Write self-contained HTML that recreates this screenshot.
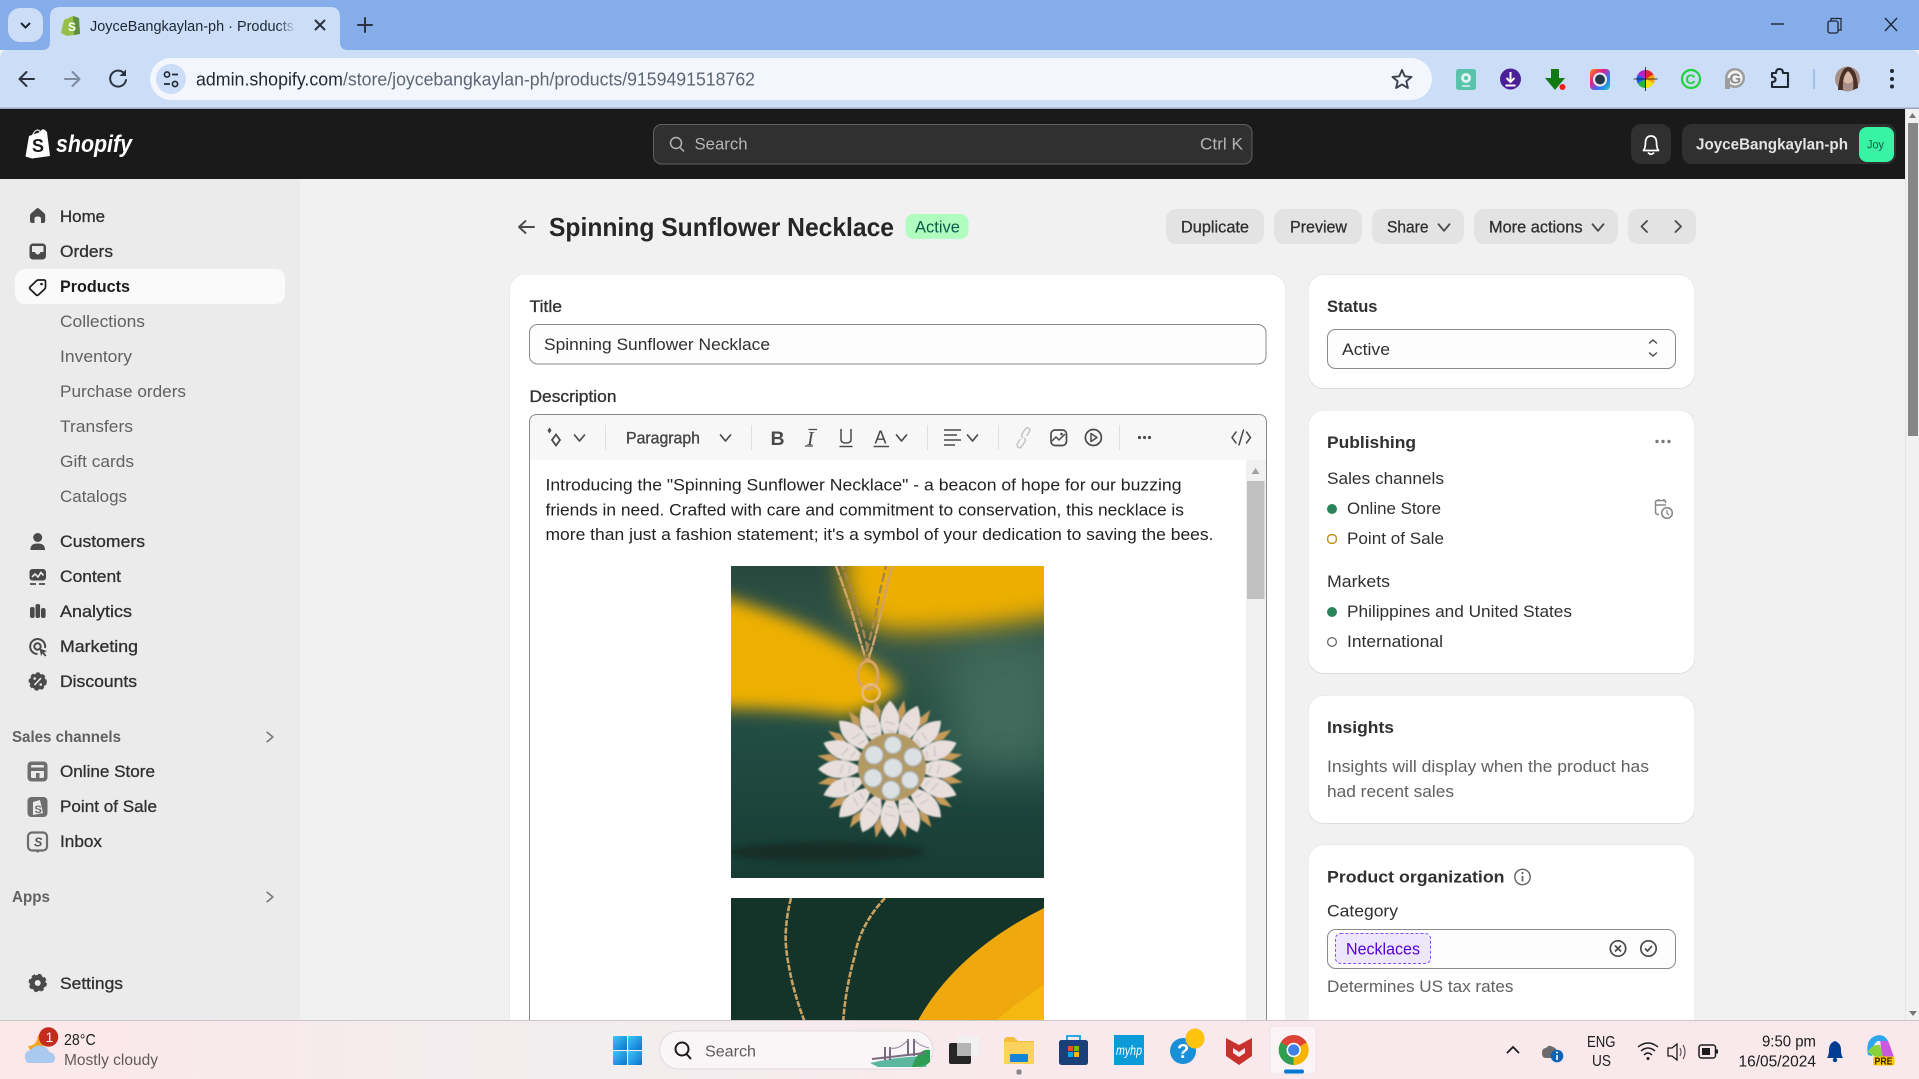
<!DOCTYPE html>
<html lang="en"><head><meta charset="utf-8"><title>Spinning Sunflower Necklace</title>
<style>
html,body{margin:0;padding:0;background:#f1f1f1;overflow:hidden}
svg{display:block}
text{font-family:"Liberation Sans",sans-serif;font-size:16.5px;fill:#303030;white-space:pre}
.m{stroke:#303030;stroke-width:.3px}
.g{fill:#616161}
.s{fill:#4a4a4a}
.b{font-weight:700}
.sb{font-weight:700;fill:#616161;font-size:15.5px}
.l{fill:none;stroke:#4a4a4a;stroke-width:1.6;stroke-linecap:round;stroke-linejoin:round}
.w{fill:none;stroke:#fff;stroke-width:1.7;stroke-linecap:round;stroke-linejoin:round}
.d{fill:none;stroke:#2b3340;stroke-width:2;stroke-linecap:round;stroke-linejoin:round}
.t{fill:#1c1c1c}
</style></head>
<body>
<svg xmlns="http://www.w3.org/2000/svg" width="1919" height="1079" viewBox="0 0 1919 1079">
<defs>
<filter id="b06"><feGaussianBlur stdDeviation=".8"/></filter>
<filter id="b2" x="-20%" y="-50%" width="140%" height="200%"><feGaussianBlur stdDeviation="3"/></filter>
<filter id="b5" x="-30%" y="-30%" width="160%" height="160%"><feGaussianBlur stdDeviation="8"/></filter>
<filter id="b9" x="-30%" y="-30%" width="160%" height="160%"><feGaussianBlur stdDeviation="12"/></filter>
<filter id="b20" x="-50%" y="-50%" width="200%" height="200%"><feGaussianBlur stdDeviation="22"/></filter>
<clipPath id="c1"><rect x="731" y="566" width="313" height="312"/></clipPath>
<clipPath id="c2"><rect x="731" y="898" width="313" height="122"/></clipPath>
<linearGradient id="tb" x1="0" x2="1" y1="0" y2="0"><stop offset="0" stop-color="#fce7e9"/><stop offset=".3" stop-color="#f2eeef"/><stop offset=".52" stop-color="#f9e9ec"/><stop offset="1" stop-color="#f9e9ec"/></linearGradient>
<linearGradient id="gr1" x1="0" x2="0" y1="0" y2="1"><stop offset="0" stop-color="#27493e"/><stop offset=".3" stop-color="#34574a"/><stop offset=".55" stop-color="#214c42"/><stop offset="1" stop-color="#173c34"/></linearGradient>
<linearGradient id="win" x1="0" x2="1" y1="0" y2="1"><stop offset="0" stop-color="#42c5f5"/><stop offset="1" stop-color="#0a73cf"/></linearGradient>
<linearGradient id="rb" x1="0" x2="1" y1="0" y2="1"><stop offset="0" stop-color="#ff8a00"/><stop offset=".35" stop-color="#e0218a"/><stop offset=".7" stop-color="#2a7bff"/><stop offset="1" stop-color="#22d3a5"/></linearGradient>
<linearGradient id="fade" x1="0" x2="1" y1="0" y2="0"><stop offset="0" stop-color="#cbddf7" stop-opacity="0"/><stop offset="1" stop-color="#cbddf7"/></linearGradient>
<g id="petal"><path d="M0 -72 Q19 -52 0 -27 Q-19 -52 0 -72Z" fill="#e8dfdc"/><path d="M-5 -50 L5 -47 M-4 -41 L4 -39" stroke="#b9bcc2" stroke-width="1" fill="none"/></g>
<path id="tip" d="M0 -74 L4 -62 L0 -52 L-4 -62Z"/>
<path id="ch" d="M-5 -3 L0 3 L5 -3" fill="none" stroke="#4a4a4a" stroke-width="1.700" stroke-linecap="round" stroke-linejoin="round"/>
</defs>

<!-- page -->
<rect width="1919" height="1079" fill="#f1f1f1"/>
<rect x="0" y="179" width="300" height="841" fill="#ebebeb"/>

<!-- chrome tab strip -->
<rect width="1919" height="50" fill="#84adea"/>
<rect x="8" y="8" width="35" height="34" rx="12" fill="#cbddf7"/>
<path d="M21 23 L25.500 27.500 L30 23" fill="none" stroke="#1c2530" stroke-width="2"/>
<path d="M42 50 Q50 50 50 42 V17 Q50 7 60 7 H330 Q340 7 340 17 V42 Q340 50 348 50 Z" fill="#cbddf7"/>
<path d="M64 20 L73 16 L79 18 L80 34 L67 36 L61 33 Z" fill="#95bf47"/><path d="M73 16 L79 18 L80 34 L74 35 Z" fill="#5e8e3e"/>
<text x="68" y="31" style="font-size:12px;font-weight:700;fill:#fff">S</text>
<text x="90" y="31" textLength="204" lengthAdjust="spacingAndGlyphs" style="font-size:14.5px;fill:#1f2733">JoyceBangkaylan-ph · Products</text>
<rect x="278" y="14" width="18" height="24" fill="url(#fade)"/>
<path d="M315.500 20.500 L324.500 29.500 M324.500 20.500 L315.500 29.500" class="d"/>
<path d="M365 18 V32 M358 25 H372" class="d"/>
<path d="M1771 24 H1784" stroke="#1c2530" stroke-width="1.400"/>
<rect x="1828" y="21" width="10" height="12" rx="2" fill="none" stroke="#1c2530" stroke-width="1.300"/><path d="M1831 21 V18.500 H1841 V30 H1838" fill="none" stroke="#1c2530" stroke-width="1.200"/>
<path d="M1885 18 L1897 31 M1897 18 L1885 31" stroke="#1c2530" stroke-width="1.300"/>

<!-- chrome toolbar -->
<path d="M0 58 Q0 50 8 50 H1911 Q1919 50 1919 58 V108 H0 Z" fill="#cbddf7"/>
<rect x="0" y="107.500" width="1919" height="1.500" fill="#9aa6b8"/>
<path d="M34 79 H20 M26.500 72 L19.500 79 L26.500 86" class="d"/>
<path d="M65 79 H79 M72.500 72 L79.500 79 L72.500 86" class="d" style="stroke:#7f8b9e"/>
<path d="M125 74.500 A8 8 0 1 0 126 80" class="d"/><path d="M126 69.500 V76 H119.500 Z" fill="#2b3340"/>
<rect x="150" y="58" width="1282" height="42" rx="21" fill="#f3f7fd"/>
<circle cx="171" cy="79" r="15" fill="#cbddf7"/>
<circle cx="167" cy="74.500" r="2.600" fill="none" stroke="#1f2733" stroke-width="1.600"/><path d="M172 74.500 H178 M164 84 H170" stroke="#1f2733" stroke-width="1.800"/><circle cx="175" cy="84" r="2.600" fill="none" stroke="#1f2733" stroke-width="1.600"/>
<text x="196" y="85.500" textLength="147" lengthAdjust="spacingAndGlyphs" style="font-size:18.500px;fill:#1f2733">admin.shopify.com</text>
<text x="343" y="85.500" textLength="412" lengthAdjust="spacingAndGlyphs" style="font-size:18.500px;fill:#5d6675">/store/joycebangkaylan-ph/products/9159491518762</text>
<path d="M1402 70 L1404.700 76.300 L1411.500 76.900 L1406.300 81.300 L1407.900 88 L1402 84.400 L1396.100 88 L1397.700 81.300 L1392.500 76.900 L1399.300 76.300 Z" fill="none" stroke="#3a4250" stroke-width="1.900" stroke-linejoin="round"/>
<!-- extensions -->
<rect x="1456" y="69" width="20" height="21" rx="2.500" fill="#5ac3ab"/><circle cx="1466" cy="78" r="5" fill="#dff3ee"/><circle cx="1466" cy="78" r="2" fill="#5ac3ab"/><path d="M1462 86 H1470" stroke="#dff3ee" stroke-width="1.500"/>
<circle cx="1510.500" cy="79" r="10.500" fill="#4a1f98"/><path d="M1510.500 72 V81 M1506.500 78 L1510.500 82 L1514.500 78 M1505.500 85.500 H1515.500" fill="none" stroke="#fff" stroke-width="2"/>
<path d="M1551 69 H1559 V78 H1565 L1555 90 L1545 78 H1551 Z" fill="#137a13"/><circle cx="1562.500" cy="87" r="3" fill="#f01c1c"/>
<rect x="1590" y="69" width="20" height="21" rx="4" fill="url(#rb)"/><circle cx="1600" cy="79.500" r="7" fill="#e8eef2"/><circle cx="1600" cy="79.500" r="5" fill="#23394a"/>
<g transform="translate(1645.600 79)"><path d="M0 0 L0 -9 A9 9 0 0 1 7.800 -4.500 Z" fill="#e5232a"/><path d="M0 0 L7.800 -4.500 A9 9 0 0 1 7.800 4.500 Z" fill="#f5a300"/><path d="M0 0 L7.800 4.500 A9 9 0 0 1 0 9 Z" fill="#f2e500"/><path d="M0 0 L0 9 A9 9 0 0 1 -7.800 4.500 Z" fill="#25b43a"/><path d="M0 0 L-7.800 4.500 A9 9 0 0 1 -7.800 -4.500 Z" fill="#1a5cf0"/><path d="M0 0 L-7.800 -4.500 A9 9 0 0 1 0 -9 Z" fill="#b422c8"/><path d="M0 -12 V12 M-12 0 H12" stroke="#111" stroke-width=".8"/></g>
<circle cx="1691" cy="79" r="9" fill="none" stroke="#1fd13a" stroke-width="2.200"/><text x="1685.500" y="84" style="font-size:14px;font-weight:700;fill:#1fd13a">C</text>
<circle cx="1735" cy="78" r="10" fill="#9d9d9d"/><circle cx="1735" cy="78" r="7.500" fill="#f2f2f2"/><rect x="1725" y="78" width="5" height="11" fill="#9d9d9d"/><text x="1729.500" y="83.500" style="font-size:15px;font-weight:700;fill:#8a8a8a">G</text>
<path d="M1772 73 H1776 Q1776 69 1779.500 69 Q1783 69 1783 73 H1788 V87 H1772 V82 Q1775.500 82 1775.500 79.500 Q1775.500 77 1772 77 Z" fill="none" stroke="#1f2733" stroke-width="2.100" stroke-linejoin="round"/>
<path d="M1814 69 V89" stroke="#8fb0df" stroke-width="1.300"/>
<circle cx="1847.500" cy="79" r="12.500" fill="#a89088"/><ellipse cx="1848" cy="76" rx="6" ry="7.500" fill="#d8b8a6"/><path d="M1838 90 Q1840 68 1848 67 Q1857 68 1858 88 L1853 90 Q1855 76 1848 71 Q1842 76 1843 90 Z" fill="#4a2f26"/>
<circle cx="1892" cy="71" r="2" fill="#1f2733"/><circle cx="1892" cy="79" r="2" fill="#1f2733"/><circle cx="1892" cy="86.500" r="2" fill="#1f2733"/>

<!-- shopify header -->
<rect x="0" y="109" width="1905" height="70" fill="#1a1a1a"/>
<path d="M29 136 L40 132 Q42 128 45 130 L47 132 L50 156 L32 158.500 L25.500 156.500 Z" fill="#fff"/>
<path d="M32 137 Q34 130 38 130 Q41 131 41 135" fill="none" stroke="#fff" stroke-width="1"/>
<text x="32" y="152" style="font-size:18px;font-weight:700;fill:#1a1a1a">S</text>
<text x="56" y="152" textLength="76" lengthAdjust="spacingAndGlyphs" style="font-size:24px;font-weight:700;font-style:italic;fill:#fff">shopify</text>
<rect x="653.500" y="124.500" width="598.500" height="39.500" rx="8" fill="#303030" stroke="#616161"/>
<circle cx="676" cy="143" r="5.500" fill="none" stroke="#b5b5b5" stroke-width="1.500"/><path d="M680 147.500 L684 151.500" stroke="#b5b5b5" stroke-width="1.500"/>
<text x="694.500" y="149.500" textLength="53" lengthAdjust="spacingAndGlyphs" style="fill:#b5b5b5">Search</text>
<text x="1200" y="149.500" textLength="43" lengthAdjust="spacingAndGlyphs" style="fill:#b5b5b5">Ctrl K</text>
<rect x="1631" y="124" width="40" height="40" rx="10" fill="#303030"/>
<path d="M1651 136 Q1646 136 1645.500 142 Q1645.500 148 1643.500 150.500 H1658.500 Q1656.500 148 1656.500 142 Q1656 136 1651 136 Z" class="w"/><path d="M1648.500 153 Q1651 155.500 1653.500 153" class="w"/>
<rect x="1682" y="124" width="214" height="40" rx="10" fill="#303030"/>
<text x="1696" y="149.500" textLength="152" lengthAdjust="spacingAndGlyphs" style="font-weight:700;fill:#e3e3e3;font-size:16px">JoyceBangkaylan-ph</text>
<rect x="1859" y="127" width="35" height="35" rx="8" fill="#36f4a4"/>
<text x="1867" y="148.500" textLength="17" lengthAdjust="spacingAndGlyphs" style="font-size:11.500px;fill:#1b5c41">Joy</text>

<!-- scrollbar -->
<rect x="1905" y="109" width="14" height="911" fill="#f1f1f1"/><path d="M1905.500 109 V1020" stroke="#e4e4e4"/>
<rect x="1908" y="123" width="10" height="313" fill="#868686"/>
<path d="M1912.500 113 L1916 118 H1909 Z" fill="#777"/><path d="M1909 1011 H1917 L1913 1016 Z" fill="#777"/>

<!-- sidebar -->
<rect x="15" y="269" width="270" height="35" rx="10" fill="#fafafa"/>
<g>
<path d="M37.700 208 Q38.500 208 39.500 209 L44 213 Q45.200 214 45.200 216 V221 Q45.200 223 43 223 H41 V218.500 Q41 216.500 37.700 216.500 Q34.500 216.500 34.500 218.500 V223 H32.500 Q30 223 30 221 V216 Q30 214 31.500 213 L36 209 Q37 208 37.700 208 Z" fill="#4a4a4a"/>
<rect x="29.500" y="243.500" width="16.500" height="16" rx="3.500" fill="#4a4a4a"/><path d="M32 246 H43.500 V252 H40.500 Q39.500 254.500 37.700 254.500 Q36 254.500 35 252 H32 Z" fill="#ebebeb"/>
<path d="M38 280 H44 Q45.500 280 45.500 281.500 V287 Q45.500 288 44.700 289 L38.200 295 Q37.300 295.700 36.300 295 L30 289 Q29.200 288 30 287 L36.300 281 Q37 280 38 280 Z" fill="none" stroke="#1a1a1a" stroke-width="1.700" stroke-linejoin="round"/><circle cx="41.500" cy="284" r="1.300" fill="#1a1a1a"/>
<circle cx="37.700" cy="537.500" r="4.500" fill="#4a4a4a"/><path d="M30.500 550 Q30 543.500 37.700 543.500 Q45.200 543.500 45 550 Z" fill="#4a4a4a"/>
<rect x="29.500" y="569" width="16.500" height="11.500" rx="3" fill="#4a4a4a"/><path d="M32 577 L35 574 L38 577 L41 572.500 L43.500 575.500" fill="none" stroke="#ebebeb" stroke-width="1.600"/><path d="M30 584 H36 M39 584 H45" stroke="#4a4a4a" stroke-width="1.700"/>
<rect x="30" y="607" width="4.600" height="11" rx="2" fill="#4a4a4a"/><rect x="35.500" y="604" width="4.600" height="14" rx="2" fill="#4a4a4a"/><rect x="41" y="608" width="4.600" height="10" rx="2" fill="#4a4a4a"/>
<path d="M45 648 A7.500 7.500 0 1 0 37.500 654" fill="none" stroke="#4a4a4a" stroke-width="2"/><circle cx="37.500" cy="646.500" r="3.200" fill="none" stroke="#4a4a4a" stroke-width="2"/><path d="M39.500 648.500 L47 651 L44 652.500 L46.500 655.500 L45 656.500 L42.500 653.500 L41 656 Z" fill="#4a4a4a"/>
<circle cx="37.700" cy="681.500" r="8" fill="#4a4a4a" stroke="#4a4a4a" stroke-width="2.200" stroke-dasharray="3.500 2.500"/><path d="M34.500 685 L41 678" stroke="#ebebeb" stroke-width="1.600"/><circle cx="34.700" cy="678.500" r="1.300" fill="#ebebeb"/><circle cx="40.700" cy="684.500" r="1.300" fill="#ebebeb"/>
<rect x="27.500" y="761.500" width="20" height="20" rx="4" fill="#6e6e6e"/><rect x="31" y="765" width="13" height="13" rx="1.500" fill="#ebebeb"/><rect x="31" y="767.500" width="13" height="3.500" fill="#6e6e6e"/><rect x="36" y="773" width="3.500" height="5" fill="#6e6e6e"/>
<rect x="27.500" y="797" width="20" height="20" rx="4" fill="#6e6e6e"/><path d="M33 802 L40 800 L43 813 L33 815 Z" fill="#ebebeb"/><text x="34.500" y="813" style="font-size:11px;font-weight:700;fill:#6e6e6e">S</text>
<rect x="28" y="832.500" width="19" height="18" rx="4" fill="#ebebeb" stroke="#6e6e6e" stroke-width="2.200"/><path d="M34.500 850 L37.700 853 L41 850 Z" fill="#6e6e6e"/><text x="34" y="846.500" style="font-size:12.500px;font-weight:700;font-style:italic;fill:#5a5a5a">S</text>
<circle cx="37.700" cy="983" r="5.500" fill="none" stroke="#4a4a4a" stroke-width="5"/><circle cx="37.700" cy="983" r="8" fill="none" stroke="#4a4a4a" stroke-width="2.400" stroke-dasharray="3.500 2.800"/><circle cx="37.700" cy="983" r="2.600" fill="#ebebeb"/>
<use href="#ch" transform="translate(270 737) rotate(-90) scale(.95)" style="opacity:.7"/><use href="#ch" transform="translate(270 897) rotate(-90) scale(.95)" style="opacity:.7"/>
</g>
<text class="m" x="60" y="222" textLength="45" lengthAdjust="spacingAndGlyphs">Home</text>
<text class="m" x="60" y="257" textLength="53" lengthAdjust="spacingAndGlyphs">Orders</text>
<text class="b" x="60" y="292" textLength="70" lengthAdjust="spacingAndGlyphs" style="fill:#1c1c1c">Products</text>
<text class="g" x="60" y="327" textLength="85" lengthAdjust="spacingAndGlyphs">Collections</text>
<text class="g" x="60" y="362" textLength="72" lengthAdjust="spacingAndGlyphs">Inventory</text>
<text class="g" x="60" y="397" textLength="126" lengthAdjust="spacingAndGlyphs">Purchase orders</text>
<text class="g" x="60" y="432" textLength="73" lengthAdjust="spacingAndGlyphs">Transfers</text>
<text class="g" x="60" y="467" textLength="74" lengthAdjust="spacingAndGlyphs">Gift cards</text>
<text class="g" x="60" y="502" textLength="67" lengthAdjust="spacingAndGlyphs">Catalogs</text>
<text class="m" x="60" y="547" textLength="85" lengthAdjust="spacingAndGlyphs">Customers</text>
<text class="m" x="60" y="582" textLength="61" lengthAdjust="spacingAndGlyphs">Content</text>
<text class="m" x="60" y="617" textLength="72" lengthAdjust="spacingAndGlyphs">Analytics</text>
<text class="m" x="60" y="652" textLength="78" lengthAdjust="spacingAndGlyphs">Marketing</text>
<text class="m" x="60" y="687" textLength="77" lengthAdjust="spacingAndGlyphs">Discounts</text>
<text class="sb" x="12" y="742" textLength="109" lengthAdjust="spacingAndGlyphs">Sales channels</text>
<text class="m" x="60" y="777" textLength="95" lengthAdjust="spacingAndGlyphs">Online Store</text>
<text class="m" x="60" y="812" textLength="97" lengthAdjust="spacingAndGlyphs">Point of Sale</text>
<text class="m" x="60" y="847" textLength="42" lengthAdjust="spacingAndGlyphs">Inbox</text>
<text class="sb" x="12" y="902" textLength="38" lengthAdjust="spacingAndGlyphs">Apps</text>
<text class="m" x="60" y="989" textLength="63" lengthAdjust="spacingAndGlyphs">Settings</text>

<!-- page heading -->
<path d="M534 227 H519.500 M525.500 221 L519 227 L525.500 233" fill="none" stroke="#4a4a4a" stroke-width="1.900" stroke-linecap="round" stroke-linejoin="round"/>
<text x="549" y="236" textLength="345" lengthAdjust="spacingAndGlyphs" style="font-size:26px;font-weight:700;fill:#262626">Spinning Sunflower Necklace</text>
<rect x="905.500" y="214" width="63" height="25" rx="8" fill="#affebf"/>
<text x="915" y="232.500" textLength="45" lengthAdjust="spacingAndGlyphs" style="fill:#0a5a48">Active</text>

<rect x="1166" y="209" width="98" height="35" rx="10" fill="#e3e3e3"/>
<text x="1181" y="232.500" textLength="68" lengthAdjust="spacingAndGlyphs" class="m">Duplicate</text>
<rect x="1274" y="209" width="88" height="35" rx="10" fill="#e3e3e3"/>
<text x="1290" y="232.500" textLength="57" lengthAdjust="spacingAndGlyphs" class="m">Preview</text>
<rect x="1372" y="209" width="92" height="35" rx="10" fill="#e3e3e3"/>
<text x="1387" y="232.500" textLength="41.500" lengthAdjust="spacingAndGlyphs" class="m">Share</text><use href="#ch" transform="translate(1444 227.500) scale(1.100)"/>
<rect x="1474" y="209" width="144" height="35" rx="10" fill="#e3e3e3"/>
<text x="1489" y="232.500" textLength="93.500" lengthAdjust="spacingAndGlyphs" class="m">More actions</text><use href="#ch" transform="translate(1598 227.500) scale(1.100)"/>
<rect x="1628" y="209" width="68" height="35" rx="10" fill="#e3e3e3"/>
<path d="M1647 221 L1641.500 226.500 L1647 232 M1675.500 221 L1681 226.500 L1675.500 232" class="l" style="stroke-width:1.800"/>

<!-- main card -->
<rect x="509.500" y="274" width="776.500" height="800" rx="16" fill="#e2e2e2"/>
<rect x="510" y="274.500" width="775.500" height="800" rx="15.500" fill="#fff"/>
<text x="529.500" y="312" textLength="32.500" lengthAdjust="spacingAndGlyphs" class="m">Title</text>
<rect x="529.500" y="324.500" width="736.500" height="39.500" rx="8" fill="#fdfdfd" stroke="#8a8a8a"/>
<text x="544" y="350" textLength="226" lengthAdjust="spacingAndGlyphs">Spinning Sunflower Necklace</text>
<text x="529.500" y="402" textLength="87" lengthAdjust="spacingAndGlyphs" class="m">Description</text>

<!-- editor -->
<path d="M529.500 1030 V422.500 Q529.500 414.500 537.500 414.500 H1258 Q1266.500 414.500 1266.500 422.500 V1030 Z" fill="#fff" stroke="#8a8a8a"/>
<path d="M530 460 V423 Q530 415 538 415 H1258 Q1266 415 1266 423 V460 Z" fill="#f7f7f7"/>
<g stroke="#e0e0e0" stroke-width="1"><path d="M605.500 425 V450 M751.500 425 V450 M927.500 425 V450 M998.500 425 V450 M1119.500 425 V450"/></g>
<path d="M556 434.500 L560 440 L556 445.500 L552 440 Z" fill="none" stroke="#4a4a4a" stroke-width="1.800"/><path d="M549.500 427.500 L551.500 430.500 L549.500 433.500 L547.500 430.500 Z" fill="#4a4a4a"/>
<use href="#ch" transform="translate(579.500 438)"/>
<text x="626" y="443.500" textLength="74" lengthAdjust="spacingAndGlyphs" style="fill:#4a4a4a" class="m">Paragraph</text>
<use href="#ch" transform="translate(725.500 438)"/>
<text x="770.500" y="445" style="font-size:19.500px;font-weight:700;fill:#4a4a4a">B</text>
<text x="807" y="445" style="font-family:'Liberation Serif',serif;font-size:20px;font-style:italic;fill:#4a4a4a">I</text><path d="M805 446 H813 M808.500 429.500 H817" stroke="#4a4a4a" stroke-width="1.300"/>
<path d="M841 429 V439.500 Q841 443 846 443 Q851 443 851 439.500 V429 M839.500 446.500 H852.500" fill="none" stroke="#4a4a4a" stroke-width="1.500"/>
<text x="874.500" y="443.500" style="font-size:18px;fill:#4a4a4a">A</text><path d="M873.500 446.500 H889" stroke="#4a4a4a" stroke-width="1.500"/>
<use href="#ch" transform="translate(901.500 438)"/>
<path d="M944 430 H961 M944 435 H957 M944 440 H961 M944 445 H955" stroke="#4a4a4a" stroke-width="1.500"/>
<use href="#ch" transform="translate(972.500 438)"/>
<path d="M1020 439.500 L1017.500 443.500 Q1016.500 446.500 1018.500 447.500 Q1020.500 448.500 1022 446 L1025 441.500 Q1026 439.500 1024.500 438.500 M1027 435.500 L1029.500 431.500 Q1030.500 429 1028.500 428 Q1026.500 427 1025 429.500 L1022 434 Q1021 436 1022.500 437.500" fill="none" stroke="#c4c4c4" stroke-width="1.500" stroke-linecap="round"/>
<rect x="1051" y="430" width="15.500" height="15.500" rx="4" fill="none" stroke="#4a4a4a" stroke-width="1.700"/><path d="M1052 441 L1056 437 L1059 440 L1065 434" fill="none" stroke="#4a4a4a" stroke-width="1.500"/><circle cx="1061.500" cy="434" r="1.300" fill="#4a4a4a"/>
<circle cx="1093.400" cy="437.500" r="8" fill="none" stroke="#4a4a4a" stroke-width="1.700"/><path d="M1091 433.500 L1097 437.500 L1091 441.500 Z" fill="none" stroke="#4a4a4a" stroke-width="1.500" stroke-linejoin="round"/>
<circle cx="1139.500" cy="437.500" r="1.600" fill="#4a4a4a"/><circle cx="1144.500" cy="437.500" r="1.600" fill="#4a4a4a"/><circle cx="1149.500" cy="437.500" r="1.600" fill="#4a4a4a"/>
<path d="M1236 432 L1232 437.500 L1236 443 M1246.500 432 L1250.500 437.500 L1246.500 443 M1243.500 430 L1239 445" fill="none" stroke="#4a4a4a" stroke-width="1.500" stroke-linecap="round"/>

<!-- editor text -->
<text x="545.500" y="490.500" textLength="636" lengthAdjust="spacingAndGlyphs" style="fill:#202223">Introducing the "Spinning Sunflower Necklace" - a beacon of hope for our buzzing</text>
<text x="545.500" y="515.500" textLength="638.500" lengthAdjust="spacingAndGlyphs" style="fill:#202223">friends in need. Crafted with care and commitment to conservation, this necklace is</text>
<text x="545.500" y="540" textLength="668" lengthAdjust="spacingAndGlyphs" style="fill:#202223">more than just a fashion statement; it's a symbol of your dedication to saving the bees.</text>

<!-- editor scrollbar -->
<rect x="1246" y="460" width="20" height="570" fill="#f1f1f1"/>
<path d="M1255.500 468 L1259.500 474 H1251.500 Z" fill="#a3a3a3"/>
<rect x="1247" y="481" width="17.500" height="118" fill="#c1c1c1"/>

<!-- image 1 -->
<g clip-path="url(#c1)">
<rect x="731" y="566" width="313" height="312" fill="url(#gr1)"/>
<rect x="950" y="640" width="110" height="130" fill="#3f6a5b" filter="url(#b20)"/>
<path d="M845 530 H1075 V612 Q985 630 905 632 Q865 632 850 605 Q840 575 845 530Z" fill="#ecaf02" filter="url(#b9)"/>
<path d="M690 588 Q790 612 855 652 Q895 676 900 688 Q878 708 845 716 Q800 708 690 708Z" fill="#eeb000" filter="url(#b5)"/>
<ellipse cx="827" cy="852" rx="98" ry="10" fill="#122e28" filter="url(#b2)"/>
<!-- chain -->
<g fill="none" stroke="#cfa36a" stroke-width="2.400" stroke-linecap="round">
<path d="M836 566 Q845 590 852 612 Q860 640 866 660" stroke-dasharray="9 3"/>
<path d="M842 566 Q853 592 858 612 Q866 640 870 660" stroke="#a8844e" stroke-dasharray="7 5" stroke-dashoffset="4"/>
<path d="M892 566 Q886 590 881 612 Q875 640 868 660" stroke-dasharray="9 3"/>
<path d="M886 566 Q880 590 876 612 Q870 640 864 660" stroke="#a8844e" stroke-dasharray="7 5" stroke-dashoffset="4"/>
</g>
<ellipse cx="868" cy="675" rx="10" ry="14" fill="none" stroke="#d6a566" stroke-width="3"/>
<circle cx="871" cy="693" r="8.500" fill="none" stroke="#e6b777" stroke-width="3"/>
<!-- pendant -->
<g filter="url(#b06)"><g transform="translate(890 769) scale(1 .95)">
<g fill="#c69a58">
<use href="#tip" transform="rotate(11)"/><use href="#tip" transform="rotate(33)"/><use href="#tip" transform="rotate(56)"/><use href="#tip" transform="rotate(78)"/><use href="#tip" transform="rotate(101)"/><use href="#tip" transform="rotate(123)"/><use href="#tip" transform="rotate(146)"/><use href="#tip" transform="rotate(168)"/><use href="#tip" transform="rotate(191)"/><use href="#tip" transform="rotate(213)"/><use href="#tip" transform="rotate(236)"/><use href="#tip" transform="rotate(258)"/><use href="#tip" transform="rotate(281)"/><use href="#tip" transform="rotate(303)"/><use href="#tip" transform="rotate(326)"/><use href="#tip" transform="rotate(348)"/>
</g>
<use href="#petal" transform="rotate(0)"/><use href="#petal" transform="rotate(22.500)"/><use href="#petal" transform="rotate(45)"/><use href="#petal" transform="rotate(67.500)"/><use href="#petal" transform="rotate(90)"/><use href="#petal" transform="rotate(112.500)"/><use href="#petal" transform="rotate(135)"/><use href="#petal" transform="rotate(157.500)"/><use href="#petal" transform="rotate(180)"/><use href="#petal" transform="rotate(202.500)"/><use href="#petal" transform="rotate(225)"/><use href="#petal" transform="rotate(247.500)"/><use href="#petal" transform="rotate(270)"/><use href="#petal" transform="rotate(292.500)"/><use href="#petal" transform="rotate(315)"/><use href="#petal" transform="rotate(337.500)"/>
</g>
<circle cx="892" cy="767" r="34" fill="#b39a63"/>
<g fill="#dbe1e3" stroke="#a5aeb3" stroke-width="1">
<circle cx="893" cy="745" r="8.500"/><circle cx="874" cy="755" r="9"/><circle cx="913" cy="757" r="9"/><circle cx="893" cy="768" r="9.500"/><circle cx="873" cy="778" r="9"/><circle cx="910" cy="780" r="8.500"/><circle cx="891" cy="790" r="9"/>
</g></g>
</g>

<!-- image 2 -->
<g clip-path="url(#c2)">
<rect x="731" y="898" width="313" height="130" fill="#143329"/>
<path d="M913 1030 Q950 955 1044 908 V1030Z" fill="#efa90f"/>
<path d="M985 1030 Q1015 1003 1044 985 V1030Z" fill="#f5b810"/>
<g fill="none" stroke="#c9a262" stroke-width="2.600" stroke-dasharray="6 1.500">
<path d="M791 898 Q783 930 787 955 Q792 990 806 1025"/>
<path d="M885 898 Q860 925 855 955 Q845 990 843 1025"/>
</g>
</g>

<!-- status card -->
<rect x="1308" y="274.500" width="387" height="114.500" rx="16" fill="#dcdcdc"/>
<rect x="1308.500" y="275" width="386" height="113" rx="15.500" fill="#fff"/>
<text class="b" x="1327" y="312" textLength="50.500" lengthAdjust="spacingAndGlyphs" style="fill:#303030">Status</text>
<rect x="1327.500" y="329.500" width="348" height="39" rx="8" fill="#fdfdfd" stroke="#8a8a8a"/>
<text x="1342" y="355" textLength="48" lengthAdjust="spacingAndGlyphs">Active</text>
<path d="M1649.500 343 L1653 340 L1656.500 343 M1649.500 353 L1653 356 L1656.500 353" class="l" style="stroke-width:1.400"/>

<!-- publishing card -->
<rect x="1308" y="410" width="387" height="264" rx="16" fill="#dcdcdc"/>
<rect x="1308.500" y="410.500" width="386" height="262.500" rx="15.500" fill="#fff"/>
<text class="b" x="1327" y="448" textLength="89" lengthAdjust="spacingAndGlyphs" style="font-size:17px">Publishing</text>
<circle cx="1657" cy="441.500" r="1.700" fill="#7a7a7a"/><circle cx="1663" cy="441.500" r="1.700" fill="#7a7a7a"/><circle cx="1669" cy="441.500" r="1.700" fill="#7a7a7a"/>
<text x="1327" y="484" textLength="117" lengthAdjust="spacingAndGlyphs">Sales channels</text>
<circle cx="1332" cy="509" r="5" fill="#29845a"/>
<text x="1347" y="514" textLength="94" lengthAdjust="spacingAndGlyphs">Online Store</text>
<rect x="1327.700" y="534.700" width="8.600" height="8.600" rx="3.500" fill="none" stroke="#b98900" stroke-width="1.300"/>
<text x="1347" y="544" textLength="97" lengthAdjust="spacingAndGlyphs">Point of Sale</text>
<path d="M1665.500 503 Q1666 500.500 1664 500.500 H1657 Q1655.500 500.500 1655.500 502.500 V512 Q1655.500 514.500 1658 514.500 H1659 M1655.500 505 H1666 M1658.500 499 V501.500 M1664 499 V501.500" fill="none" stroke="#8a8a8a" stroke-width="1.500"/>
<circle cx="1667" cy="513" r="5.300" fill="#fff" stroke="#8a8a8a" stroke-width="1.600"/><path d="M1667 510 V513.300 L1669 515" fill="none" stroke="#8a8a8a" stroke-width="1.300"/>
<text x="1327" y="587" textLength="63" lengthAdjust="spacingAndGlyphs">Markets</text>
<circle cx="1332" cy="612" r="5" fill="#29845a"/>
<text x="1347" y="617" textLength="225" lengthAdjust="spacingAndGlyphs">Philippines and United States</text>
<circle cx="1332" cy="642" r="4.400" fill="none" stroke="#616161" stroke-width="1.200"/>
<text x="1347" y="647" textLength="96" lengthAdjust="spacingAndGlyphs">International</text>

<!-- insights card -->
<rect x="1308" y="695" width="387" height="129" rx="16" fill="#dcdcdc"/>
<rect x="1308.500" y="695.500" width="386" height="127.500" rx="15.500" fill="#fff"/>
<text class="b" x="1327" y="733" textLength="67" lengthAdjust="spacingAndGlyphs" style="font-size:17px">Insights</text>
<text class="g" x="1327" y="772" textLength="322" lengthAdjust="spacingAndGlyphs">Insights will display when the product has</text>
<text class="g" x="1327" y="797" textLength="127" lengthAdjust="spacingAndGlyphs">had recent sales</text>

<!-- product org card -->
<rect x="1308" y="844.500" width="387" height="230" rx="16" fill="#e0e0e0"/>
<rect x="1308.500" y="845" width="386" height="230" rx="15.500" fill="#fff"/>
<text class="b" x="1327" y="882.500" textLength="177.500" lengthAdjust="spacingAndGlyphs" style="font-size:17px">Product organization</text>
<circle cx="1522.500" cy="877" r="7.700" fill="none" stroke="#616161" stroke-width="1.400"/><path d="M1522.500 876 V881.500" stroke="#616161" stroke-width="1.700"/><circle cx="1522.500" cy="873" r="1.100" fill="#616161"/>
<text x="1327" y="916.500" textLength="71" lengthAdjust="spacingAndGlyphs">Category</text>
<rect x="1327.500" y="929.500" width="348" height="39" rx="8" fill="#fdfdfd" stroke="#8a8a8a"/>
<rect x="1335.500" y="933.500" width="95" height="30" rx="5" fill="#ede7fd" stroke="#8051ff" stroke-dasharray="3 2"/>
<text x="1346" y="954.500" textLength="74" lengthAdjust="spacingAndGlyphs" style="fill:#5700d1">Necklaces</text>
<circle cx="1618" cy="948.500" r="7.700" fill="none" stroke="#4a4a4a" stroke-width="1.700"/><path d="M1615 945.500 L1621 951.500 M1621 945.500 L1615 951.500" stroke="#4a4a4a" stroke-width="1.700"/>
<circle cx="1648.500" cy="948.500" r="7.700" fill="none" stroke="#4a4a4a" stroke-width="1.700"/><path d="M1645 948.500 L1647.500 951 L1652 946" fill="none" stroke="#4a4a4a" stroke-width="1.700"/>
<text class="g" x="1327" y="992" textLength="186.500" lengthAdjust="spacingAndGlyphs">Determines US tax rates</text>

<!-- taskbar -->
<rect x="0" y="1020" width="1919" height="59" fill="url(#tb)"/>
<path d="M0 1020.500 H1919" stroke="#c9c4c6"/>
<path d="M28 1046 Q37 1046 38 1035 Q47 1042 42 1050 L30 1050 Z" fill="#f4a51d"/>
<path d="M29 1063 Q25 1063 25 1056 Q25 1051 31 1050 Q35 1044 42 1046 Q48 1047 49 1052 Q55 1053 55 1058 Q55 1063 50 1063 Z" fill="#a9c9ee"/>
<circle cx="48.500" cy="1037" r="9.700" fill="#c42b1c"/>
<text x="45.700" y="1042" style="font-size:13.500px;fill:#fff">1</text>
<text x="64" y="1045" textLength="31.700" lengthAdjust="spacingAndGlyphs" style="font-size:15.500px;fill:#1c1c1c">28°C</text>
<text x="64" y="1065" textLength="94" lengthAdjust="spacingAndGlyphs" style="font-size:15.500px;fill:#5f5a5c">Mostly cloudy</text>

<g fill="url(#win)"><rect x="613" y="1036" width="14" height="14" rx="1"/><rect x="628" y="1036" width="14" height="14" rx="1"/><rect x="613" y="1051" width="14" height="14" rx="1"/><rect x="628" y="1051" width="14" height="14" rx="1"/></g>
<rect x="659.500" y="1031" width="273.500" height="38" rx="19" fill="#faf6f8" stroke="#dedadc"/>
<circle cx="682" cy="1049" r="6.500" fill="none" stroke="#1a1a1a" stroke-width="2"/><path d="M686.500 1054 L691 1059" stroke="#1a1a1a" stroke-width="2"/>
<text x="705" y="1056.500" textLength="51" lengthAdjust="spacingAndGlyphs" style="font-size:15.500px;fill:#5f5a5c">Search</text>
<path d="M870 1063 Q900 1056 930 1056 L926 1067 H878 Z" fill="#5bb7a0"/><path d="M912 1067 Q918 1048 930 1050 V1062 Q925 1067 912 1067Z" fill="#2f9e54"/>
<path d="M885 1060 V1047 M890 1060 V1047 M908 1056 V1039 M914 1056 V1039 M872 1059 L925 1053" stroke="#7a6a80" stroke-width="2"/><path d="M890 1048 Q899 1050 908 1040 M914 1040 Q920 1046 929 1048" fill="none" stroke="#9a8aa0" stroke-width="1"/>
<rect x="949" y="1043" width="22" height="21" rx="2" fill="#262626"/><rect x="957" y="1036" width="22" height="20" rx="2" fill="#f2f0f1"/><rect x="957" y="1043" width="14" height="13" fill="#b4b4b4"/>

<path d="M1004 1041 Q1004 1037 1008 1037 H1014 L1018 1041 H1034 V1064 H1004 Z" fill="#f4bf3a"/><rect x="1004" y="1042" width="30" height="22" rx="1" fill="#fbd35c"/><rect x="1010" y="1054" width="18" height="8" rx="1" fill="#1284d6"/>
<rect x="1016.500" y="1069.500" width="5" height="5" rx="1.500" fill="#8a8587"/>
<rect x="1059" y="1040" width="29" height="25" rx="2.500" fill="#1b3f78"/><path d="M1067 1040 V1036 H1080 V1040" fill="none" stroke="#2ba8e8" stroke-width="2"/>
<rect x="1068" y="1046" width="5" height="5" fill="#f25022"/><rect x="1074" y="1046" width="5" height="5" fill="#7fba00"/><rect x="1068" y="1052" width="5" height="5" fill="#00a4ef"/><rect x="1074" y="1052" width="5" height="5" fill="#ffb900"/>
<rect x="1114" y="1035" width="30" height="30" fill="#0a9bd8"/>
<text x="1116" y="1055" textLength="26" lengthAdjust="spacingAndGlyphs" style="font-size:14px;font-style:italic;fill:#fff">myhp</text>
<circle cx="1183" cy="1051" r="13" fill="#1a8fd8"/>
<text x="1177" y="1058" style="font-size:20px;font-weight:700;fill:#fff">?</text>
<ellipse cx="1195" cy="1038.500" rx="9.500" ry="10" fill="#ffc20e"/>
<path d="M1226 1038 L1239 1045 L1252 1038 V1056 L1239 1065 L1226 1056 Z M1233 1048 V1053 L1239 1057 L1245 1053 V1048 L1239 1052 Z" fill="#c8312e" fill-rule="evenodd"/>
<rect x="1270" y="1026" width="46" height="48" rx="4" fill="#fbf3f5" stroke="#ece4e6"/>
<g transform="translate(1293.700 1050)"><path d="M0 0 L-13 -7.500 A15 15 0 0 1 13 -7.500 Z" fill="#db4437"/><path d="M0 0 L13 -7.500 A15 15 0 0 1 0 15 Z" fill="#f4b400"/><path d="M0 0 L0 15 A15 15 0 0 1 -13 -7.500 Z" fill="#2e9e4f"/><circle r="7.200" fill="#fff"/><circle r="5.600" fill="#3f7fe6"/></g>
<rect x="1284" y="1069.500" width="20" height="4" rx="2" fill="#0078d4"/>

<path d="M1507 1053 L1513 1047 L1519 1053" fill="none" stroke="#1a1a1a" stroke-width="1.800"/>
<path d="M1546 1058 Q1542 1058 1542 1053 Q1542 1048 1546 1048 Q1549 1044 1553 1047 Q1557 1048 1556 1052 L1552 1058 Z" fill="#6c6c6c"/><circle cx="1557" cy="1056" r="6.300" fill="#0b63b8"/><path d="M1557 1055 V1060" stroke="#fff" stroke-width="1.600"/><circle cx="1557" cy="1052.500" r="1" fill="#fff"/>
<text x="1587" y="1047" textLength="28.500" lengthAdjust="spacingAndGlyphs" style="font-size:15.500px;fill:#1c1c1c">ENG</text>
<text x="1592" y="1066" textLength="19" lengthAdjust="spacingAndGlyphs" style="font-size:15.500px;fill:#1c1c1c">US</text>
<path d="M1638 1047 Q1648 1039 1658 1047 M1641 1051 Q1648 1045 1655 1051 M1644 1055 Q1648 1051 1652 1055" fill="none" stroke="#1c1c1c" stroke-width="1.400"/><circle cx="1648" cy="1058.500" r="1.500" fill="#1c1c1c"/>
<path d="M1668 1048 H1672 L1677 1044 V1060 L1672 1056 H1668 Z" fill="none" stroke="#1c1c1c" stroke-width="1.300"/><path d="M1680 1048 Q1682 1052 1680 1056 M1683 1045 Q1687 1052 1683 1059" fill="none" stroke="#5f5a5c" stroke-width="1.200"/>
<rect x="1699" y="1045" width="16.500" height="13" rx="2.500" fill="none" stroke="#1c1c1c" stroke-width="1.500"/><rect x="1702" y="1048" width="8" height="7" fill="#1c1c1c"/><rect x="1716" y="1049.500" width="2" height="4" fill="#1c1c1c"/>
<text x="1762" y="1046.500" textLength="54" lengthAdjust="spacingAndGlyphs" style="font-size:15.500px;fill:#1c1c1c">9:50 pm</text>
<text x="1738.500" y="1066.500" textLength="77.500" lengthAdjust="spacingAndGlyphs" style="font-size:15.500px;fill:#1c1c1c">16/05/2024</text>
<path d="M1835 1041 Q1829 1043 1829 1050 Q1829 1055 1827 1058 H1843 Q1841 1055 1841 1050 Q1841 1043 1835 1041 Z" fill="#003e92"/><circle cx="1835" cy="1060" r="2.200" fill="#003e92"/>
<path d="M1880 1039 Q1886 1036 1889 1043 L1894 1057 H1882 Z" fill="#c95adf"/>
<path d="M1868 1055 Q1865 1040 1875 1036 Q1884 1033 1888 1041 L1878 1041 Q1872 1044 1872 1056Z" fill="#2fa6f0"/>
<path d="M1868 1052 Q1876 1059 1883 1057 L1880 1045 Q1872 1044 1868 1052Z" fill="#8ad23c"/>
<rect x="1873" y="1056.500" width="21.500" height="9" rx="2" fill="#ffc800"/>
<text x="1874.500" y="1064.500" textLength="18" lengthAdjust="spacingAndGlyphs" style="font-size:10px;font-weight:700;fill:#2a2200">PRE</text>
</svg>
</body></html>
